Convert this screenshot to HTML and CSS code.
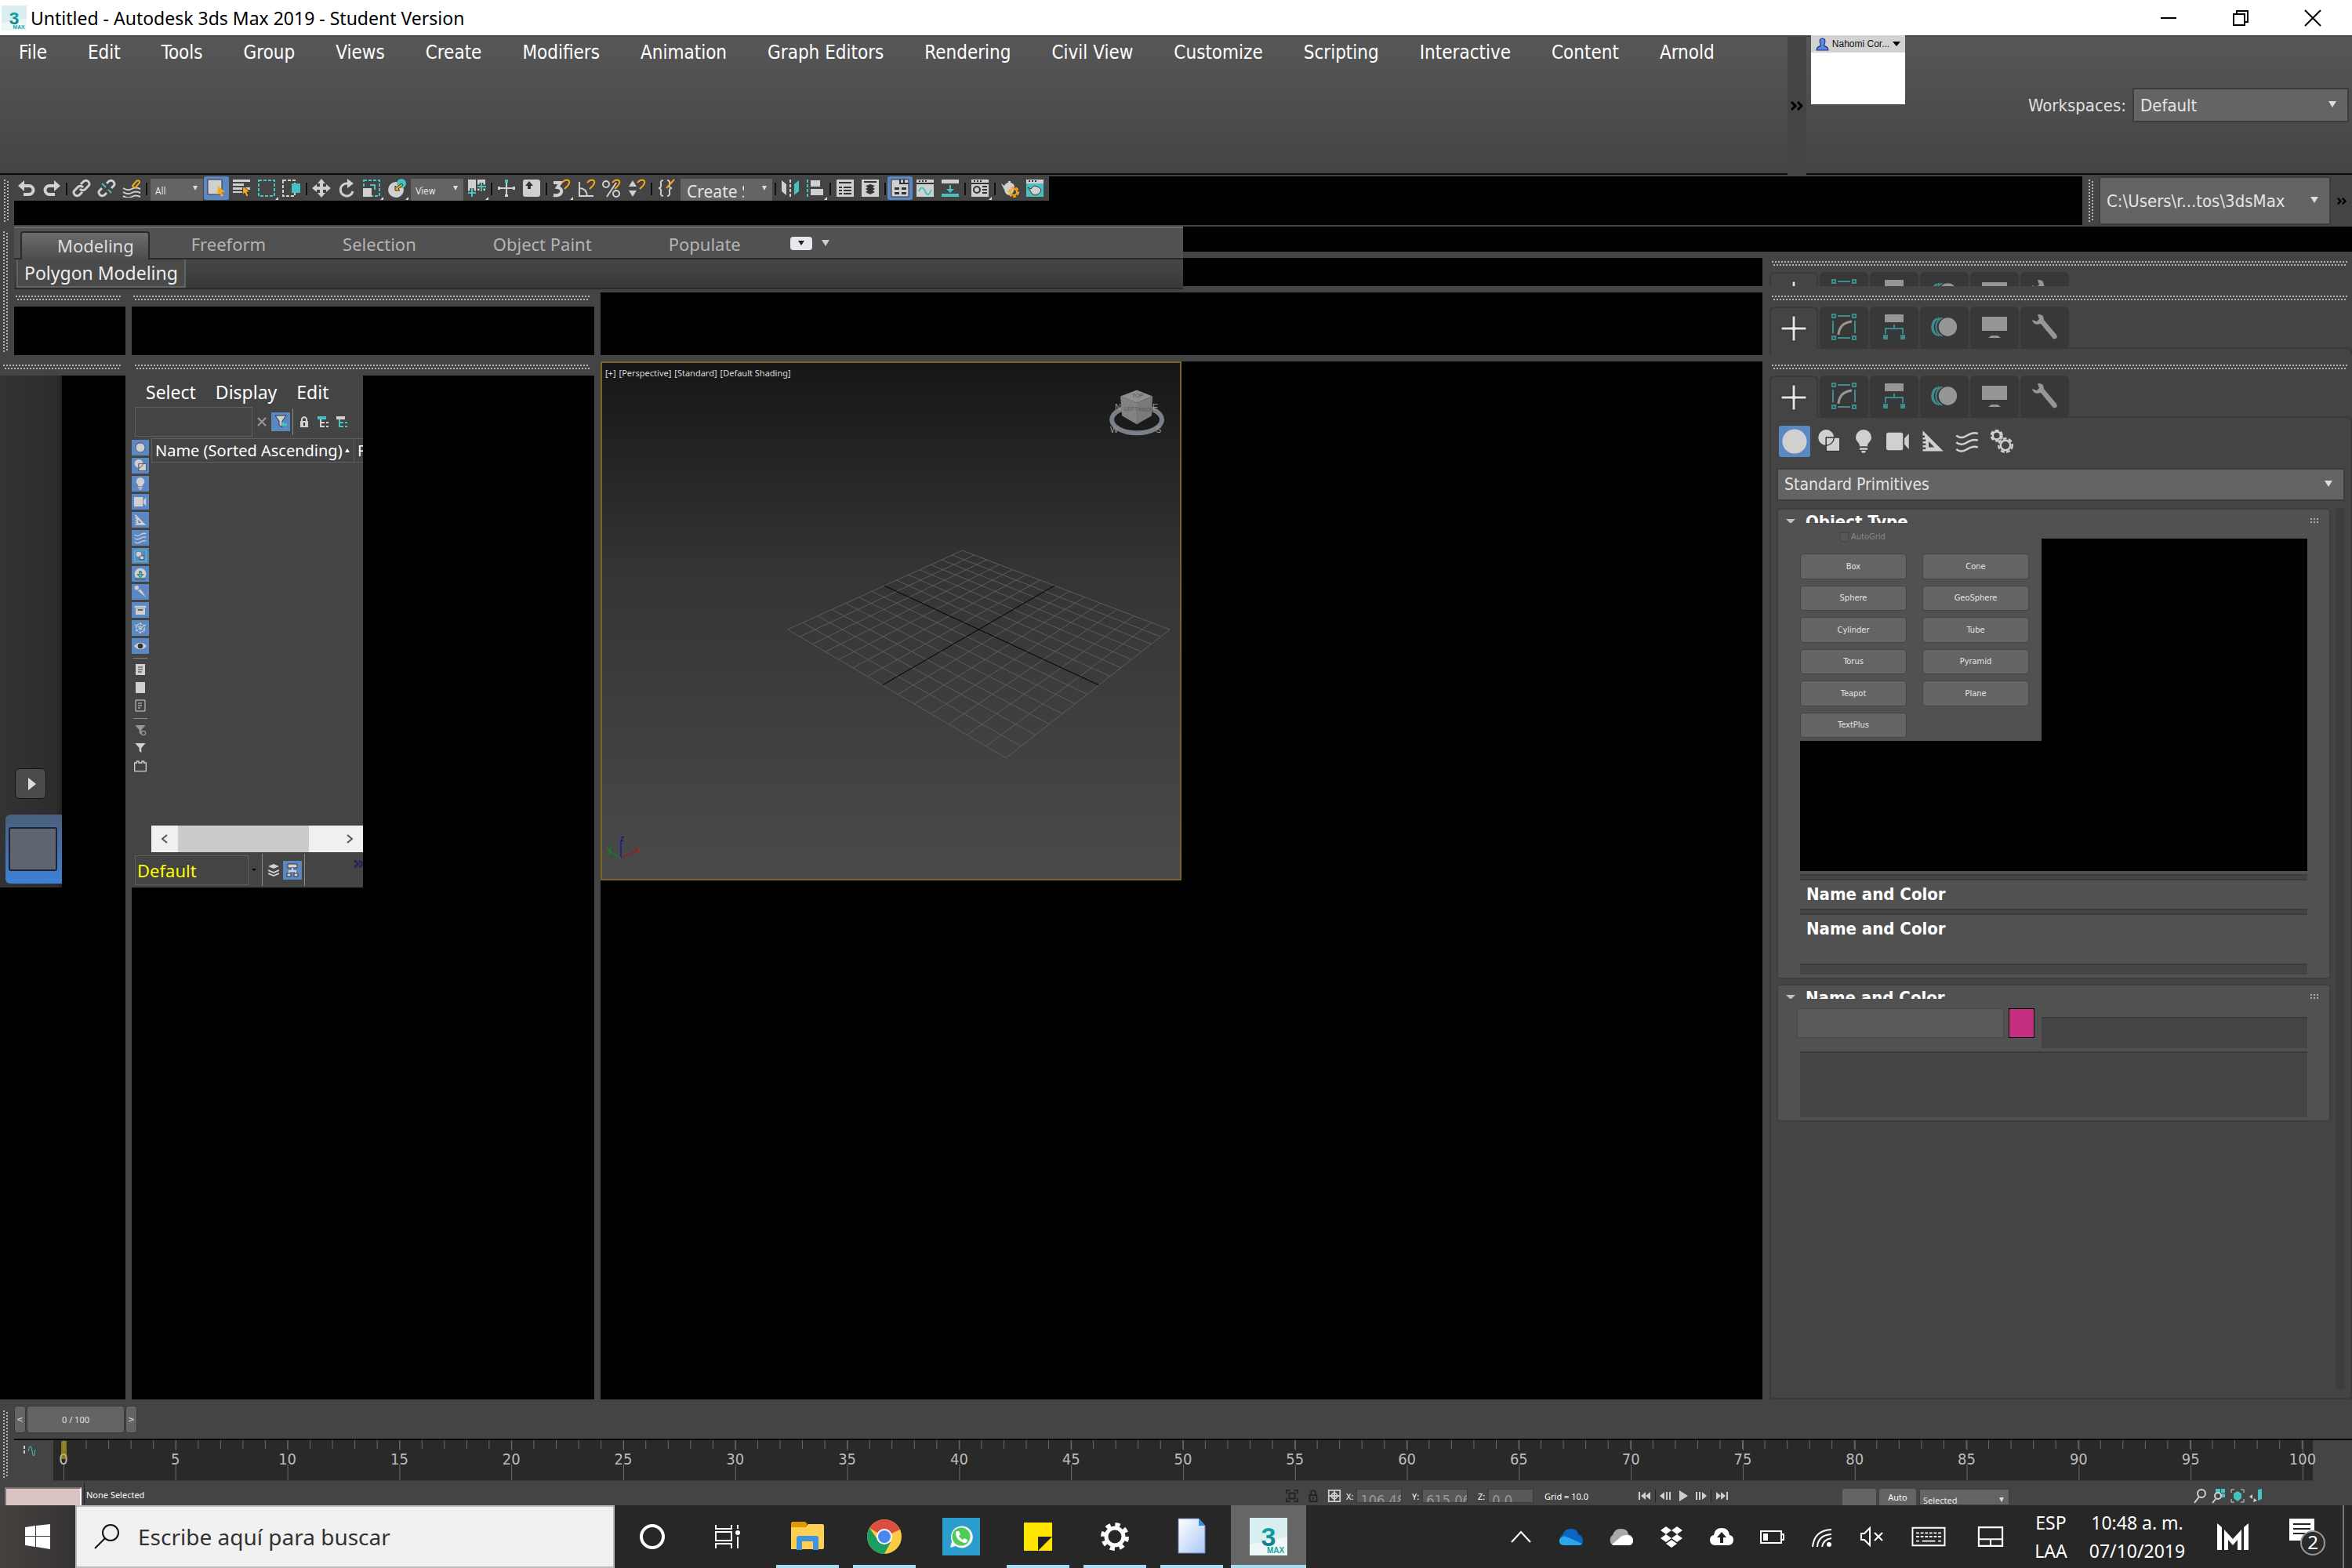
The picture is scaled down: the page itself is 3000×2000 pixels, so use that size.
FILE: index.html
```html
<!DOCTYPE html>
<html lang="en">
<head>
<meta charset="utf-8">
<title>Untitled - Autodesk 3ds Max 2019 - Student Version</title>
<link rel="stylesheet" href="styles.css">
</head>
<body>
<svg class="defs" aria-hidden="true">
  <defs>
    <linearGradient id="paper" x1="0" y1="0" x2="1" y2="1"><stop offset="0" stop-color="#fff"/><stop offset="1" stop-color="#a9c8f5"/></linearGradient>
    <linearGradient id="teal" x1="0" y1="0" x2="0" y2="1"><stop offset="0" stop-color="#0fb5b5"/><stop offset="1" stop-color="#12707c"/></linearGradient>
    <symbol id="max" viewBox="0 0 48 48"><rect width="48" height="48" fill="#d9eeee"/><path d="M0 34L48 24V48H0z" fill="#eef6f6"/><text x="24" y="36" text-anchor="middle" class="max-three" fill="url(#teal)">3</text><text x="33" y="45" text-anchor="middle" class="max-word">MAX</text></symbol>
    <symbol id="sphere" viewBox="0 0 24 24"><circle cx="12" cy="12" r="11" class="c"/></symbol>
    <symbol id="shapes" viewBox="0 0 24 24"><circle cx="9" cy="8" r="8" class="c"/><rect x="9" y="8" width="14" height="14" class="c k"/><path d="M9 16V8h8a8 8 0 0 1-8 8z" class="c k"/></symbol>
    <symbol id="bulb" viewBox="0 0 24 24"><path d="M12 0a8 8 0 0 0-8 8c0 4 4 5 4 9h8c0-4 4-5 4-9a8 8 0 0 0-8-8zM8 18.500h8v2H8zM10 21.500h4v2h-4z" class="c"/></symbol>
    <symbol id="camera" viewBox="0 0 24 24"><rect x="0" y="3" width="17" height="18" rx="2" class="c"/><path d="M18.500 9L23 4v16l-4.500-5z" class="c"/></symbol>
    <symbol id="ruler" viewBox="0 0 24 24"><path fill-rule="evenodd" d="M2 1l21 21H2v-2h3v-2H2v-2h3v-2H2v-2h3v-2H2V8h2V6H2zM8 12v6h6z" class="c"/></symbol>
    <symbol id="waves" viewBox="0 0 24 24"><path d="M1 6q5 4 11 0t11-2M1 13q5 4 11 0t11-2M1 20q5 4 11 0t11-2" class="s"/></symbol>
    <symbol id="gears" viewBox="0 0 24 24"><circle cx="7" cy="6" r="4" class="s"/><circle cx="7" cy="6" r="5.500" class="s dash"/><circle cx="16" cy="16" r="5" class="s"/><circle cx="16" cy="16" r="7" class="s dash"/></symbol>
    <symbol id="magnet" viewBox="0 0 24 24"><path d="M13 5q4-5 8-3 3 2-1 7l-4 4" class="so"/></symbol>
    <symbol id="plus" viewBox="0 0 34 34"><path d="M15 1h4v14h14v4H19v14h-4V19H1v-4h14z" fill="#e4e4e4" stroke="#2c2c2c"/></symbol>
    <symbol id="modify" viewBox="0 0 34 34"><path d="M9 3h16M9 31h16M3 9v16M31 9v16" class="std"/><path d="M2 1h4v4H2zM28 1h4v4h-4zM2 29h4v4H2zM28 29h4v4h-4z" class="std"/><path d="M10 27Q11 12 27 10" fill="none" stroke="#969696" stroke-width="3"/></symbol>
    <symbol id="hierarchy" viewBox="0 0 34 34"><rect x="5" y="1" width="24" height="10" fill="#969696"/><path d="M17 14v5M6 26v-7h22v7" class="std"/><path d="M3 27h6v6H3zM25 27h6v6h-6z" fill="#3f8c8c"/></symbol>
    <symbol id="motion" viewBox="0 0 38 34"><path d="M12 4a14 14 0 0 0 0 26M8 5a14 14 0 0 0 0 24M16 4a14 14 0 0 0 0 26" class="std"/><circle cx="24" cy="17" r="13" fill="#969696"/></symbol>
    <symbol id="display" viewBox="0 0 34 34"><path d="M1 4h32v18H1zM9 31h16l-4-3h-8z" fill="#969696"/></symbol>
    <symbol id="wrench" viewBox="0 0 34 34"><path d="M1 8l6 2 3-3-2-6q8-1 8 7l16 19q2 4-1 5t-4-1L12 13Q3 16 1 8z" fill="#969696"/></symbol>
    <symbol id="funnel" viewBox="0 0 24 24"><path d="M2 3h20l-8 9v9l-4-3v-6z" class="c"/></symbol>
  </defs>
</svg>

<header class="titlebar">
  <svg class="app-icon"><use href="#max"/></svg>
  <h1>Untitled - Autodesk 3ds Max 2019 - Student Version</h1>
  <div class="window-buttons">
    <button aria-label="Minimize"><svg viewBox="0 0 22 22"><path d="M1 11h20"/></svg></button>
    <button aria-label="Restore"><svg viewBox="0 0 22 22"><path d="M2 6h14v14H2zM6 6V2h14v14h-4"/></svg></button>
    <button aria-label="Close"><svg viewBox="0 0 22 22"><path d="M1 1l20 20M21 1L1 21"/></svg></button>
  </div>
</header>

<div class="menu-row">
  <nav class="menu shade" aria-label="Main menu">
    <button>File</button><button>Edit</button><button>Tools</button><button>Group</button><button>Views</button><button>Create</button><button>Modifiers</button><button>Animation</button><button>Graph Editors</button><button>Rendering</button><button>Civil View</button><button>Customize</button><button>Scripting</button><button>Interactive</button><button>Content</button><button>Arnold</button>
  </nav>
  <button class="overflow" aria-label="More menus"><svg viewBox="0 0 16 12"><path d="M1 1l5 5-5 5M9 1l5 5-5 5"/></svg></button>
  <div class="menu-side shade">
    <div class="account"><button><svg viewBox="0 0 16 16"><path d="M8 1q4 0 3 5-1 3-1 4 5 1 5 5H1q0-4 5-5 0-1-1-4-1-5 3-5z" fill="#5f86e8" stroke="#14306e"/></svg><span>Nahomi Cor...</span><i class="tri"></i></button></div>
    <div class="workspaces"><label for="ws">Workspaces:</label><span class="combo"><select id="ws"><option>Default</option></select></span></div>
  </div>
</div>

<div class="tool-row">
  <i class="grip-v"></i>
  <div class="tool-dock">
    <div class="tools" role="toolbar">
      <button aria-label="Undo"><svg viewBox="0 0 24 24"><path d="M1 9l8-7v5h6a7 7 0 0 1 0 15H8v-4h7a3 3 0 0 0 0-7H9v5z" class="c"/></svg></button>
      <button aria-label="Redo"><svg viewBox="0 0 24 24"><path d="M23 9l-8-7v5H9a7 7 0 0 0 0 15h7v-4H9a3 3 0 0 1 0-7h6v5z" class="c"/></svg></button>
      <i class="sep"></i>
      <button aria-label="Link"><svg viewBox="0 0 24 24"><path d="M11 7l4-4q4-2 6 1t0 5l-5 5q-3 2-6-1M13 17l-4 4q-4 2-6-1t0-5l5-5q3-2 6 1" class="s3"/></svg></button>
      <button aria-label="Unlink"><svg viewBox="0 0 24 24"><path d="M12 6l3-3q4-2 6 1t0 5l-3 3M12 18l-3 3q-4 2-6-1t0-5l3-3" class="s3"/><path d="M6 6l5 5M14 14l4 4" class="st"/></svg></button>
      <button aria-label="Bind to space warp"><svg viewBox="0 0 24 24"><path d="M1 12q6 4 11 1t11 0M1 17q6 4 11 1t11 0M1 22q6 4 11 1t11 0" class="s"/><path d="M13 9l5-6q4-2 4 2l-5 6q-3 1-4-2z" class="so"/></svg></button>
      <i class="sep"></i>
      <span class="combo combo-all"><select aria-label="Selection filter"><option>All</option></select></span>
      <button class="on" aria-label="Select object"><svg viewBox="0 0 24 24"><path d="M1 1h18v19H1z" class="c k"/><path d="M14 9l9 8h-4l2 5-3 1-2-5-3 3z" class="o"/></svg></button>
      <button aria-label="Select by name"><svg viewBox="0 0 24 24"><path d="M1 1h22v3H1zM1 6h14v3H1zM1 11h22v3H1zM1 16h13v2H1z" class="c"/><path d="M14 9l9 8h-4l2 5-3 1-2-5-3 3z" class="o k"/></svg></button>
      <button class="fly" aria-label="Rectangular region"><svg viewBox="0 0 24 24"><path d="M2 2h20v20H2z" class="st dash"/></svg></button>
      <button aria-label="Window crossing"><svg viewBox="0 0 24 24"><path d="M1 2h15v20H1z" class="s dash"/><path d="M12 6h11v12H12z" class="t"/></svg></button>
      <i class="sep"></i>
      <button aria-label="Move"><svg viewBox="0 0 24 24"><path d="M12 0l5 6h-3v4h4V7l6 5-6 5v-3h-4v4h3l-5 6-5-6h3v-4H6v3l-6-5 6-5v3h4V6H7z" class="c"/></svg></button>
      <button aria-label="Rotate"><svg viewBox="0 0 24 24"><path d="M14 6h-2a8 8 0 1 0 8 10" class="s3"/><path d="M13 0l8 6-8 6z" class="c"/></svg></button>
      <button class="fly" aria-label="Scale"><svg viewBox="0 0 24 24"><path d="M2 2h20v20H2z" class="st dash"/><path d="M1 12h11v11H1z" class="c"/><path d="M10 8h6v6" class="st"/></svg></button>
      <button class="fly" aria-label="Place"><svg viewBox="0 0 24 24"><circle cx="11" cy="14" r="10" class="c"/><circle cx="18" cy="6" r="6" class="t"/><path d="M10 15V9l2 2 6-5 2 2-6 5 2 2z" class="o k"/></svg></button>
      <span class="combo combo-view"><select aria-label="Reference coordinate system"><option>View</option></select></span>
      <button class="fly" aria-label="Pivot center"><svg viewBox="0 0 24 24"><path d="M1 1h10v15H1zM13 1h10v14H13z" class="c"/><path d="M6 12v11M1 18h10M18 5v11M13 10h11" stroke="#444" stroke-width="5"/><path d="M6 12v11M1 18h10M18 5v11M13 10h11" class="st"/></svg></button>
      <i class="sep"></i>
      <button aria-label="Manipulate"><svg viewBox="0 0 24 24"><path d="M12 5v18M1 12h22" class="s"/><path d="M10 1h4v4h-4z" class="t"/><path d="M10 20h4v3h-4zM1 10h3v4H1zM20 10h3v4h-3z" class="c"/></svg></button>
      <button aria-label="Keyboard override"><svg viewBox="0 0 24 24"><rect x="1" y="1" width="22" height="22" rx="3" class="c"/><path d="M9 3l5 6h-3v4H7V9H4z" class="d"/></svg></button>
      <i class="sep"></i>
      <button class="fly" aria-label="Snaps toggle"><svg viewBox="0 0 24 24"><path d="M2 5h9L7 11q6 1 5 6t-10 4" class="s4"/><use href="#magnet"/></svg></button>
      <button aria-label="Angle snap"><svg viewBox="0 0 24 24"><path d="M3 4v18h18M3 12q9 0 10 10" class="s"/><use href="#magnet"/></svg></button>
      <button aria-label="Percent snap"><svg viewBox="0 0 24 24"><circle cx="5" cy="7" r="4" class="s"/><circle cx="18" cy="19" r="4" class="s"/><path d="M18 5L6 23" class="s"/><use href="#magnet"/></svg></button>
      <button aria-label="Spinner snap"><svg viewBox="0 0 24 24"><path d="M7 2l5 8H2zM7 23l5-8H2z" class="c"/><use href="#magnet"/></svg></button>
      <i class="sep"></i>
      <button aria-label="Edit named selections"><svg viewBox="0 0 24 24"><path d="M8 2Q4 2 5 7t-3 5q4 0 3 5t3 5M13 2q4 0 3 5t3 5q-4 0-3 5t-3 5" class="s"/><path d="M22 1L12 12" class="so"/></svg></button>
      <span class="combo combo-set"><select aria-label="Named selection sets"><option>Create Selection Set</option></select></span>
      <i class="sep"></i>
      <button aria-label="Mirror"><svg viewBox="0 0 24 24"><path d="M1 2l6 5v14l-6-5z" class="c"/><path d="M12 1v22" class="s dash"/><path d="M23 2l-6 5v14l6-5z" class="t"/></svg></button>
      <button class="fly" aria-label="Align"><svg viewBox="0 0 24 24"><path d="M2 1v22" class="st dash"/><path d="M6 2h12v8H6zM6 13h16v8H6z" class="c"/></svg></button>
      <i class="sep"></i>
      <button aria-label="Scene explorer"><svg viewBox="0 0 24 24"><path d="M1 1h22v22H1z" class="c"/><path d="M4 5h16M4 11h4M10 11h10M4 15h4M10 15h10M4 19h4M10 19h10" class="sd"/></svg></button>
      <button aria-label="Layer explorer"><svg viewBox="0 0 24 24"><path d="M1 1h22v22H1z" class="c"/><path d="M4 4h16" class="sd"/><path d="M12 7l6 2-3 2 3 2-3 2 3 2-6 3-6-3 3-2-3-2 3-2-3-2z" class="d"/></svg></button>
      <i class="sep"></i>
      <button class="on" aria-label="Toggle ribbon"><svg viewBox="0 0 24 24"><path d="M1 1h22v22H1z" class="c k"/><path d="M12 1v5h11M17 1v5" class="sd"/><path d="M5 11h6v3H5zM14 11h6v3h-6zM5 17h6v3H5zM14 17h6v3h-6z" class="d"/></svg></button>
      <button aria-label="Curve editor"><svg viewBox="0 0 24 24"><path d="M1 1h22v22H1z" class="c"/><path d="M1 6h22M4 3h2M8 3h2M12 3h2" class="sd"/><path d="M4 16q4-9 8 0t8-2" class="st"/></svg></button>
      <button aria-label="Schematic view"><svg viewBox="0 0 24 24"><path d="M1 1h22v5H1z" class="c"/><path d="M11 8h2v5h4l-5 5-5-5h4zM1 19h22v4H1z" class="t"/></svg></button>
      <i class="sep"></i>
      <button class="fly" aria-label="Material editor"><svg viewBox="0 0 24 24"><path d="M1 1h22v22H1z" class="c"/><path d="M1 6h22M4 3h2M8 3h2M12 3h2M15 10h6M15 14h6M15 18h6" class="sd"/><circle cx="8" cy="14" r="4" class="sd"/></svg></button>
      <i class="sep"></i>
      <button aria-label="Render setup"><svg viewBox="0 0 24 24"><path d="M1 6l4 3q2-4 5-4V3h3v2q5 1 5 6-1 9-7 10-5-1-6-7z" class="c"/><circle cx="17" cy="17" r="4" class="so"/><circle cx="17" cy="17" r="6" class="so dash"/></svg></button>
      <button aria-label="Rendered frame"><svg viewBox="0 0 24 24"><path d="M1 1h22v22H1z" class="t"/><path d="M1 1h22v5H1z" class="c"/><path d="M4 3h2M8 3h2M12 3h2" class="sd"/><path d="M3 11l4 2q3-4 5-4 6 1 8 5-1 6-8 7-5-1-6-6z" class="c k"/></svg></button>
    </div>
  </div>
  <i class="grip-v"></i>
  <span class="combo combo-path"><select aria-label="Project folder"><option>C:\Users\r...tos\3dsMax</option></select></span>
  <button class="overflow small" aria-label="More tools"><svg viewBox="0 0 16 12"><path d="M1 1l5 5-5 5M9 1l5 5-5 5"/></svg></button>
</div>

<main class="workspace">
  <div class="edge"><i class="grip-v"></i></div>
  <section class="ribbon" aria-label="Ribbon">
    <div class="ribbon-tabs">
      <button class="current">Modeling</button><button>Freeform</button><button>Selection</button><button>Object Paint</button><button>Populate</button>
      <button class="ribbon-toggle" aria-label="Minimize ribbon"><span><i class="tri"></i></span><i class="tri light"></i></button>
    </div>
    <div class="ribbon-body"><button>Polygon Modeling</button></div>
  </section>
  <div class="void-top"></div>
  <div class="void-mid"></div>
  <div class="strip strip-a"><i class="grip-h"></i><div class="void"></div></div>
  <div class="strip strip-b"><i class="grip-h"></i><div class="void"></div></div>
  <div class="void-view"></div>

  <aside class="layouts">
    <i class="grip-h"></i>
    <div class="void">
      <div class="layout-bar">
        <button class="play" aria-label="Show layouts"><svg viewBox="0 0 12 16"><path d="M1 0l10 8-10 8z" fill="#ddd"/></svg></button>
        <button class="layout-thumb" aria-label="Layout"><span></span></button>
      </div>
    </div>
  </aside>

  <section class="explorer-dock">
    <i class="grip-h"></i>
    <div class="void">
      <div class="explorer">
        <div class="ex-menu"><button>Select</button><button>Display</button><button>Edit</button></div>
        <div class="ex-find">
          <input type="text" aria-label="Find">
          <button aria-label="Clear"><svg viewBox="0 0 24 24"><path d="M7 7l10 10M17 7L7 17" stroke="#999" stroke-width="2"/></svg></button>
          <button class="on" aria-label="Filter"><svg viewBox="0 0 24 24"><path d="M5 4h14l-5 7v8l-4-3v-5z" class="c k"/><path d="M12 15l4-4v3h4v3h-4v2z" class="t"/></svg></button>
          <i class="bar"></i>
          <button aria-label="Lock"><svg viewBox="0 0 24 24"><path d="M7 11h10v8H7z" class="c"/><path d="M9 11V8q3-4 6 0v3" class="s"/><path d="M12 13v4" class="sd"/></svg></button>
          <button aria-label="Expand"><svg viewBox="0 0 24 24"><path d="M5 5h11v4H5z" class="t"/><path d="M9 9v9h5M9 13h5M16 13h3M16 18h3" class="s"/></svg></button>
          <button aria-label="Collapse"><svg viewBox="0 0 24 24"><path d="M5 5h11v4H5z" class="c"/><path d="M9 9v9h5M9 13h5M16 13h3M16 18h3" class="st"/></svg></button>
        </div>
        <div class="ex-body">
          <div class="ex-side">
            <div class="ex-filters">
              <button aria-label="Geometry"><svg viewBox="0 0 24 24"><circle cx="12" cy="12" r="9" class="c k"/></svg></button>
              <button aria-label="Shapes"><svg viewBox="0 0 24 24"><use href="#shapes"/></svg></button>
              <button aria-label="Lights"><svg viewBox="0 0 24 24"><use href="#bulb"/></svg></button>
              <button aria-label="Cameras"><svg viewBox="0 0 24 24"><use href="#camera"/></svg></button>
              <button aria-label="Helpers"><svg viewBox="0 0 24 24"><use href="#ruler"/></svg></button>
              <button aria-label="Space warps"><svg viewBox="0 0 24 24"><use href="#waves"/></svg></button>
              <button aria-label="Groups"><svg viewBox="0 0 24 24"><path d="M1 1h22v22H1z" class="st"/><circle cx="9" cy="9" r="5" class="c"/><path d="M11 12h8v7h-8z" class="c k"/></svg></button>
              <button aria-label="References"><svg viewBox="0 0 24 24"><use href="#sphere"/><path d="M10 7h4v6h4l-6 6-6-6h4zM4 20h16v3H4z" class="t k"/></svg></button>
              <button aria-label="Bones"><svg viewBox="0 0 24 24"><circle cx="5" cy="4" r="4" class="c"/><path d="M7 9l6-2 10 16z" class="c"/></svg></button>
              <button aria-label="Containers"><svg viewBox="0 0 24 24"><path d="M1 4h22v4H1zM3 9h18v12H3z" class="c"/><path d="M7 12h10" class="sd"/></svg></button>
              <button aria-label="Frozen"><svg viewBox="0 0 24 24"><path d="M12 1v22M2 6l20 12M22 6L2 18" class="s dash"/><circle cx="12" cy="12" r="8" class="s dash"/></svg></button>
              <button aria-label="Hidden"><svg viewBox="0 0 24 24"><path d="M0 12q12-13 24 0-12 13-24 0z" class="c"/><circle cx="12" cy="12" r="5" class="d"/></svg></button>
            </div>
            <div class="ex-extra">
              <button aria-label="Display all"><svg viewBox="0 0 16 16"><path d="M2 1h12v14H2z" class="c"/><path d="M5 5h6M5 8h6M5 11h5" class="sd thin"/></svg></button>
              <button aria-label="Display none"><svg viewBox="0 0 16 16"><path d="M2 1h12v14H2z" class="c"/></svg></button>
              <button aria-label="Invert display"><svg viewBox="0 0 16 16"><path d="M2 1h12v14H2zM5 5h5M5 8h5M5 11h3" class="s thin"/></svg></button>
            </div>
            <div class="ex-extra">
              <button class="dim" aria-label="Advanced filter"><svg viewBox="0 0 24 24"><use href="#funnel"/><circle cx="18" cy="18" r="4" class="s"/></svg></button>
              <button aria-label="Filter selection"><svg viewBox="0 0 24 24"><use href="#funnel"/></svg></button>
              <button aria-label="Container"><svg viewBox="0 0 24 24"><path d="M1 22V6h4V3h4v3h6V3h4v3h4v16z" class="s"/></svg></button>
            </div>
          </div>
          <div class="ex-list">
            <table><thead><tr><th class="name">Name (Sorted Ascending)<i class="tri up"></i></th><th>Frozen</th></tr></thead></table>
            <div class="hscroll"><button aria-label="Scroll left"><svg viewBox="0 0 12 12"><path d="M9 1L3 6l6 5"/></svg></button><i></i><button aria-label="Scroll right"><svg viewBox="0 0 12 12"><path d="M3 1l6 5-6 5"/></svg></button></div>
          </div>
        </div>
        <div class="ex-foot">
          <input type="text" value="Default" aria-label="Explorer name"><i class="tri black"></i><i class="bar"></i>
          <button aria-label="Sort by layer"><svg viewBox="0 0 24 24"><path d="M12 4l7 3-7 3-7-3zM5 11l7 3 7-3v2l-7 3-7-3zM5 15l7 3 7-3v2l-7 3-7-3z" class="c"/></svg></button>
          <button class="on" aria-label="Sort by hierarchy"><svg viewBox="0 0 24 24"><path d="M6 4h12v5H6z" class="c k"/><path d="M12 9v4M8 16v-3h8v3" class="s"/><path d="M5 16h5v4H5zM14 16h5v4h-5z" class="c k"/></svg></button>
          <i class="bar"></i>
          <svg class="more" viewBox="0 0 16 12"><path d="M1 1l6 5-6 5M8 1l6 5-6 5"/></svg>
        </div>
      </div>
    </div>
  </section>

  <section class="view-dock">
    <div class="viewport">
      <p class="view-label"><span>[+]</span><span>[Perspective]</span> <span>[Standard]</span> <span>[Default Shading]</span></p>
      <svg class="scene" viewBox="0 0 738 658" aria-label="Perspective grid"><g id="grid"></g>
        <g class="cube">
          <ellipse cx="683" cy="72" rx="32" ry="17" fill="#1b1b1b" stroke="#7b7f87" stroke-width="6"/>
          <path d="M662 42l21-8 20 8-20 8z" fill="#8f8f8f"/><path d="M662 42l21 8v28l-19-11z" fill="#828282"/><path d="M703 42l-20 8v28l19-11z" fill="#7a7a7a"/>
          <text x="667" y="61">LEFT</text><text x="685" y="62">FRONT</text><text x="677" y="44">TOP</text>
          <text x="649" y="89" class="pt">W</text><text x="707" y="89" class="pt">S</text><text x="655" y="60" class="pt">N</text><text x="703" y="60" class="pt">E</text>
        </g>
        <g class="axes"><path d="M24 632V609" stroke="#00c"/><path d="M24 632l20-10" stroke="#c00"/><path d="M24 632l-14-8" stroke="#090"/><text x="23" y="610" fill="#00c">z</text><text x="43" y="624" fill="#b11">x</text><text x="7" y="624" fill="#090">y</text></g>
      </svg>
    </div>
  </section>

  <aside class="command">
    <div class="peek peek-a"><i class="grip-h"></i>
      <div class="tabs"><button class="current" aria-label="Create"><svg><use href="#plus"/></svg></button><button aria-label="Modify"><svg><use href="#modify"/></svg></button><button aria-label="Hierarchy"><svg><use href="#hierarchy"/></svg></button><button aria-label="Motion"><svg><use href="#motion"/></svg></button><button aria-label="Display"><svg><use href="#display"/></svg></button><button aria-label="Utilities"><svg><use href="#wrench"/></svg></button></div>
    </div>
    <div class="peek peek-b"><i class="grip-h"></i>
      <div class="tabs"><button class="current" aria-label="Create"><svg><use href="#plus"/></svg></button><button aria-label="Modify"><svg><use href="#modify"/></svg></button><button aria-label="Hierarchy"><svg><use href="#hierarchy"/></svg></button><button aria-label="Motion"><svg><use href="#motion"/></svg></button><button aria-label="Display"><svg><use href="#display"/></svg></button><button aria-label="Utilities"><svg><use href="#wrench"/></svg></button></div>
      <div class="sheet"></div>
    </div>
    <div class="peek peek-c"><i class="grip-h"></i>
      <div class="tabs"><button class="current" aria-label="Create"><svg><use href="#plus"/></svg></button><button aria-label="Modify"><svg><use href="#modify"/></svg></button><button aria-label="Hierarchy"><svg><use href="#hierarchy"/></svg></button><button aria-label="Motion"><svg><use href="#motion"/></svg></button><button aria-label="Display"><svg><use href="#display"/></svg></button><button aria-label="Utilities"><svg><use href="#wrench"/></svg></button></div>
      <div class="sheet">
        <div class="cats">
          <button class="on" aria-label="Geometry"><svg><use href="#sphere"/></svg></button><button aria-label="Shapes"><svg><use href="#shapes"/></svg></button><button aria-label="Lights"><svg><use href="#bulb"/></svg></button><button aria-label="Cameras"><svg><use href="#camera"/></svg></button><button aria-label="Helpers"><svg><use href="#ruler"/></svg></button><button aria-label="Space warps"><svg><use href="#waves"/></svg></button><button aria-label="Systems"><svg><use href="#gears"/></svg></button>
        </div>
        <span class="combo combo-prim"><select aria-label="Category"><option>Standard Primitives</option></select></span>
        <div class="rollouts">
          <div class="rollout-list">
            <section class="rollout">
              <header><i class="tri pale"></i><h2>Object Type</h2><i class="dots"></i></header>
              <div class="object-type">
                <div class="pane">
                  <label><input type="checkbox" disabled>AutoGrid</label>
                  <div class="primitives"><button>Box</button><button>Cone</button><button>Sphere</button><button>GeoSphere</button><button>Cylinder</button><button>Tube</button><button>Torus</button><button>Pyramid</button><button>Teapot</button><button>Plane</button><button>TextPlus</button></div>
                </div>
                <div class="gap-right"></div><div class="gap-left"></div>
              </div>
              <div class="ghost"><i></i><h2>Name and Color</h2></div>
              <div class="ghost tall"><i></i><h2>Name and Color</h2></div>
              <div class="ghost-end"></div>
            </section>
            <section class="rollout">
              <header><i class="tri pale"></i><h2>Name and Color</h2><i class="dots"></i></header>
              <div class="name-color"><input type="text" aria-label="Object name"><button class="swatch" aria-label="Object color"></button><i></i></div>
              <div class="name-rest"></div>
            </section>
          </div>
          <div class="track"></div>
        </div>
      </div>
    </div>
  </aside>
</main>

<section class="timeline" aria-label="Timeline">
  <i class="grip-v"></i>
  <div class="time-main">
    <div class="time-slider"><button aria-label="Previous frame">&lt;</button><button class="frame">0 / 100</button><button aria-label="Next frame">&gt;</button></div>
    <div class="track-row">
      <button class="mini-curve" aria-label="Mini curve editor"><svg viewBox="0 0 16 14"><path d="M1 1v12" class="s dash"/><path d="M6 8q3-13 5 0t4-2" class="st thin"/></svg></button>
      <div class="ruler"><ol class="scale"><li>0</li><li>5</li><li>10</li><li>15</li><li>20</li><li>25</li><li>30</li><li>35</li><li>40</li><li>45</li><li>50</li><li>55</li><li>60</li><li>65</li><li>70</li><li>75</li><li>80</li><li>85</li><li>90</li><li>95</li><li>100</li></ol></div>
    </div>
  </div>
</section>

<footer class="status">
  <div class="listener"></div><i class="bar"></i><span class="message">None Selected</span>
  <div class="coords">
    <button aria-label="Isolate"><svg viewBox="0 0 20 20"><path d="M2 7V2h5M13 2h5v5M18 13v5h-5M7 18H2v-5M6 6h8v8H6z" class="sk"/></svg></button>
    <button aria-label="Selection lock"><svg viewBox="0 0 20 20"><path d="M5 9h10v9H5zM7 9V4q3-4 6 0v5M10 12v3" class="sk"/></svg></button>
    <button aria-label="Absolute mode"><svg viewBox="0 0 20 20"><path d="M2 2h16v16H2zM10 2v16M2 10h16" class="s"/><circle cx="10" cy="10" r="4" class="s"/></svg></button>
    <label>X: <input type="text" value="106.48" disabled></label><label>Y: <input type="text" value="615.06" disabled></label><label>Z: <input type="text" value="0.0" disabled></label>
    <span>Grid = 10.0</span>
  </div>
  <div class="playback">
    <button aria-label="Go to start"><svg viewBox="0 0 20 16"><path d="M3 3v10" class="s"/><path d="M11 3v10L5 8zM17 3v10l-6-5z" class="c"/></svg></button><i class="bar"></i>
    <button aria-label="Previous"><svg viewBox="0 0 20 16"><path d="M8 3v10L2 8z" class="c"/><path d="M11 3v10M15 3v10" class="s"/></svg></button>
    <button aria-label="Play"><svg viewBox="0 0 20 16"><path d="M5 1l11 7-11 7z" class="c"/></svg></button>
    <button aria-label="Next"><svg viewBox="0 0 20 16"><path d="M12 3v10l6-5z" class="c"/><path d="M5 3v10M9 3v10" class="s"/></svg></button><i class="bar"></i>
    <button aria-label="Go to end"><svg viewBox="0 0 20 16"><path d="M17 3v10" class="s"/><path d="M9 3v10l6-5zM3 3v10l6-5z" class="c"/></svg></button>
  </div>
  <div class="keys"><button class="set" aria-label="Set key"></button><button>Auto</button><span class="combo combo-key"><select aria-label="Key set"><option>Selected</option></select></span></div>
  <div class="nav">
    <button aria-label="Zoom"><svg viewBox="0 0 20 20"><circle cx="12" cy="7" r="5" class="s"/><path d="M9 11l-6 8" class="s"/></svg></button>
    <button aria-label="Zoom all"><svg viewBox="0 0 20 20"><path d="M6 1h6v5H6zM13 1h5v5h-5zM13 7h5v5h-5z" class="t"/><circle cx="9" cy="10" r="4" class="s"/><path d="M6 14l-4 5" class="s"/></svg></button>
    <button aria-label="Zoom extents"><svg viewBox="0 0 20 20"><path d="M2 6V2h4M14 2h4v4M18 14v4h-4M6 18H2v-4" class="s thin"/><path d="M10 4l5 3v6l-5 4-5-4V7z" class="t"/></svg></button>
    <button aria-label="Orbit"><svg viewBox="0 0 20 20"><path d="M12 2l5-1v13l-5 2z" class="t"/><path d="M1 11l4-3v6zM7 13l4 3-5 2z" class="c"/></svg></button>
  </div>
</footer>

<footer class="taskbar" lang="es">
  <button class="start" aria-label="Inicio"><svg viewBox="0 0 32 32"><path d="M0 4l13-2v13H0zM14 2l18-2v15H14zM0 16h13v13L0 27zM14 16h18v16l-18-3z" fill="#fff"/></svg></button>
  <label class="search"><svg viewBox="0 0 32 32"><circle cx="21" cy="11" r="10"/><path d="M14 18L1 31"/></svg><input type="text" placeholder="Escribe aquí para buscar" aria-label="Buscar"></label>
  <button aria-label="Cortana"><svg viewBox="0 0 36 36"><circle cx="18" cy="18" r="14" fill="none" stroke="#fff" stroke-width="4"/></svg></button>
  <button aria-label="Vista de tareas"><svg viewBox="0 0 36 36" fill="none" stroke="#fff" stroke-width="2"><path d="M3 3v5h20V3M3 33v-6h20v6M3 12h20v11H3zM31 3v5M31 18v15"/><circle cx="31" cy="13" r="2" fill="#fff"/></svg></button>
  <div class="apps">
    <button class="open" aria-label="Explorador"><svg viewBox="0 0 44 44"><path d="M1 5q0-2 2-2h16l3 3-3 4H1z" fill="#e09a00"/><path d="M1 10h18l4-4h18q2 0 2 2v28q0 2-2 2H1z" fill="#ffcf55"/><path d="M8 39V24q0-3 3-3h22q3 0 3 3v15h-7V28H15v11z" fill="#3d96dc"/></svg></button>
    <button class="open" aria-label="Chrome"><svg viewBox="0 0 48 48"><circle cx="24" cy="24" r="22" fill="#fbcb43"/><path d="M24 24L5 13A22 22 0 0 1 44 15z" fill="#dc4e41"/><path d="M24 46A22 22 0 0 1 5 13l12 17 15 1z" fill="#1a9f5c"/><circle cx="24" cy="24" r="10" fill="#fff"/><circle cx="24" cy="24" r="8" fill="#4a86f0"/></svg></button>
    <button aria-label="WhatsApp"><svg viewBox="0 0 48 48"><rect width="48" height="48" fill="#2a9ccd"/><path d="M10 38l2-8a14 14 0 1 1 5 6z" fill="#f3f3f3"/><circle cx="24" cy="24" r="11.500" fill="#4fcb58"/><path d="M18 17l3 0 2 4-2 2q2 4 5 5l2-2 4 2q0 4-4 4-11-3-11-13z" fill="#fff"/></svg></button>
    <button class="open" aria-label="Notas"><svg viewBox="0 0 48 48"><path d="M6 6h36v36H6z" fill="#ffe600"/><path d="M24 42V24h18z" fill="#222"/></svg></button>
    <button class="open" aria-label="Configuración"><svg viewBox="0 0 48 48" fill="none" stroke="#fff"><circle cx="24" cy="24" r="11" stroke-width="5"/><circle cx="24" cy="24" r="15.500" stroke-width="5" stroke-dasharray="6.170 6" /></svg></button>
    <button class="open" aria-label="Documento"><svg viewBox="0 0 48 48"><path d="M7 1h26l8 9v35H7z" fill="url(#paper)" stroke="#6d7fb5"/><path d="M33 1l8 9h-8z" fill="#3a8de6"/></svg></button>
    <button class="open active" aria-label="3ds Max"><svg><use href="#max"/></svg></button>
  </div>
  <div class="tray">
    <button aria-label="Mostrar iconos"><svg viewBox="0 0 32 32"><path d="M4 23L16 10l12 13" class="w"/></svg></button>
    <button aria-label="OneDrive"><svg viewBox="0 0 32 32"><path d="M6 27a6 7 0 0 1-1-13Q8 5 16 6q8 0 9 7 6 2 6 8t-5 6z" fill="#0a66c2"/><path d="M6 27q-6-1-5-7 3-6 9-4l20 9q-2 2-4 2z" fill="#28a8ea"/></svg></button>
    <button aria-label="Nube"><svg viewBox="0 0 32 32"><path d="M6 27a6 7 0 0 1-1-13Q8 5 16 6q8 0 9 7 6 2 6 8t-5 6z" fill="#a9a9a9"/><path d="M4 26l13-11q6-2 10 0 5 3 4 7t-5 5H6z" fill="#fff"/></svg></button>
    <button aria-label="Dropbox"><svg viewBox="0 0 32 32"><path d="M9 3l7 5-7 5-7-5zM23 3l7 5-7 5-7-5zM9 13l7 5-7 5-7-5zM23 13l7 5-7 5-7-5zM16 20l7 5-7 5-7-5z" fill="#fff"/></svg></button>
    <button aria-label="Respaldo"><svg viewBox="0 0 32 32"><path d="M7 27q-6-1-6-7 0-5 5-6 1-9 10-9t10 9q5 1 5 6 0 6-6 7z" fill="#fff"/><path d="M16 10l6 7h-4v7h-4v-7h-4z" fill="#222"/></svg></button>
    <button aria-label="Batería"><svg viewBox="0 0 32 32"><path d="M2 9h26v15H2zM29 13h2v7h-2" class="w"/><path d="M5 12h6v9H5z" fill="#fff"/></svg></button>
    <button aria-label="Wi-Fi"><svg viewBox="0 0 32 32"><path d="M4 29Q6 8 28 7M10 29q1-15 18-16M16 29q1-9 12-11" class="w"/><circle cx="25" cy="26" r="3" fill="#fff"/></svg></button>
    <button aria-label="Volumen"><svg viewBox="0 0 32 32"><path d="M2 12h4l7-7v22l-7-7H2zM19 11l10 10M29 11L19 21" class="w"/></svg></button>
    <button class="wide" aria-label="Teclado"><svg viewBox="0 0 46 30"><path d="M1 3h44v24H1z" class="w"/><path d="M6 10h34M6 15h34" class="w dash"/><path d="M6 21h4M14 21h18M36 21h4" class="w"/></svg></button>
    <button class="wide" aria-label="Panel táctil"><svg viewBox="0 0 30 26"><path d="M1 2h28v22H1zM1 16h28M15 16v8" class="w"/></svg></button>
    <button class="lang"><span>ESP</span><span>LAA</span></button>
    <button class="clock"><span>10:48 a. m.</span><span>07/10/2019</span></button>
    <button class="m" aria-label="M"><svg viewBox="0 0 42 36"><path d="M1 1l6 5v29H1zM41 1l-6 5v29h6zM10 9l11 12L32 9v26h-5V22l-6 7-6-7v13h-5z" fill="#fff"/></svg></button>
    <button class="notes" aria-label="Notificaciones"><svg viewBox="0 0 52 52"><path d="M3 3h32v28H24l-6 6v-6H3z" fill="#fff"/><path d="M8 10h22M8 16h22M8 22h16" stroke="#222" stroke-width="2"/><circle cx="33" cy="34" r="15" fill="#2b2b2b" stroke="#999" stroke-width="2"/><text x="33" y="42" text-anchor="middle">2</text></svg></button>
    <i class="peek-desktop"></i>
  </div>
</footer>
<script src="script.js"></script>
</body>
</html>
```
FILE: styles.css
```css
* { box-sizing: border-box; }
body {
  margin: 0;
  min-height: 100vh;
  display: flex;
  flex-direction: column;
  background: #444;
  color: #e0e0e0;
  font: 20px "DejaVu Sans Condensed", "Noto Sans", sans-serif;
  overflow-x: hidden;
}
button, input, select { font: inherit; color: inherit; margin: 0; padding: 0; border: 0; background: none; border-radius: 0; }
button { display: flex; align-items: center; justify-content: center; flex: none; white-space: nowrap; }
h1, h2, p, ol { margin: 0; padding: 0; font-size: inherit; }
svg { display: block; flex: none; }
i { flex: none; }
.defs { position: absolute; width: 0; height: 0; }

/* icon paint */
.c { fill: #d0d0d0; }
.t { fill: #46c2c2; }
.o { fill: #f5a81c; }
.d { fill: #333; }
.k { stroke: #333; stroke-width: 1; }
.s { fill: none; stroke: #d0d0d0; stroke-width: 2; }
.s3 { fill: none; stroke: #d0d0d0; stroke-width: 3; }
.s4 { fill: none; stroke: #d0d0d0; stroke-width: 4; }
.st { fill: none; stroke: #46c2c2; stroke-width: 2; }
.so { fill: none; stroke: #f5a81c; stroke-width: 2; }
.sd { fill: none; stroke: #333; stroke-width: 2; }
.sk { fill: none; stroke: #222; stroke-width: 2; }
.std { fill: none; stroke: #3f8c8c; stroke-width: 2; }
.w { fill: none; stroke: #fff; stroke-width: 2; }
.dash { stroke-dasharray: 4 2; }
.thin { stroke-width: 1; }

/* shared pieces */
.void { background: #000; }
.on { background: #5b87c2; border-radius: 3px; }
.tri { width: 0; height: 0; border: 4px solid transparent; border-top: 6px solid #222; border-bottom: 0; }
.tri.light { border-width: 8px 5px 0; border-top-color: #ccc; }
.tri.up { border-top: 0; border-bottom: 5px solid #fff; }
.tri.pale { border-width: 6px 6px 0; border-top-color: #c0c0c0; }
.tri.black { border-width: 3px 3px 0; border-top-color: #000; }
.grip-h {
  display: block; height: 6px; margin: 0 6px;
  background:
    repeating-linear-gradient(90deg, #b5b5b5 0 2px, transparent 2px 4px) 0 0 / 100% 2px no-repeat,
    repeating-linear-gradient(90deg, transparent 0 2px, #b5b5b5 2px 4px) 0 4px / 100% 2px no-repeat;
}
.grip-v {
  display: block; width: 6px;
  background:
    repeating-linear-gradient(#b5b5b5 0 2px, transparent 2px 4px) 0 0 / 2px 100% no-repeat,
    repeating-linear-gradient(transparent 0 2px, #b5b5b5 2px 4px) 4px 0 / 2px 100% no-repeat;
}
.combo { position: relative; display: block; flex: none; background: #646464; border: 2px solid #3d3d3d; }
.combo select { appearance: none; width: 100%; height: 100%; display: block; color: #e4e4e4; padding: 0 36px 0 8px; }
.combo::after { content: ""; position: absolute; right: 14px; top: 50%; margin-top: -5px; border: 5px solid transparent; border-top: 8px solid #ddd; border-bottom: 0; pointer-events: none; }

/* title bar */
.titlebar { height: 45px; background: #fff; color: #000; display: flex; align-items: center; padding: 0 4px 0 2px; }
.app-icon { width: 32px; height: 32px; margin-right: 5px; }
.titlebar h1 { font: 23px "Noto Sans", sans-serif; flex: 1; }
.window-buttons { display: flex; }
.window-buttons button { width: 92px; height: 42px; }
.window-buttons svg { width: 22px; height: 22px; fill: none; stroke: #000; stroke-width: 2; }
.max-three { font: bold 34px "Liberation Sans", sans-serif; }
.max-word { font: bold 10px "Liberation Sans", sans-serif; fill: #12a5a5; }

/* menu */
.menu-row { display: flex; height: 178px; padding-top: 2px; }
.shade { background: linear-gradient(#575757, #444); border-bottom: 2px solid #0a0a0a; }
.menu { flex: 1; display: flex; align-items: flex-start; padding: 5px 0 0 24px; gap: 52px; min-width: 0; overflow: hidden; }
.menu button { font-size: 24px; line-height: 30px; color: #fff; }
.overflow { width: 24px; }
.overflow svg { width: 16px; height: 12px; fill: none; stroke: #000; stroke-width: 3; }
.menu-side { width: 696px; display: flex; justify-content: space-between; padding: 0 4px 0 6px; }
.account { width: 120px; height: 88px; margin-top: -2px; background: #fff; }
.account button { width: 100%; height: 22px; background: #d2d2d2; color: #111; font: 12px "Liberation Sans", sans-serif; gap: 4px; }
.account svg { width: 17px; height: 17px; }
.account .tri { border-width: 6px 5px 0; border-top-color: #000; }
.workspaces { display: flex; align-items: center; gap: 8px; font-size: 22px; }
.workspaces .combo { width: 276px; height: 44px; }

/* tool bar */
.tool-row { display: flex; height: 62px; margin-top: 2px; padding-left: 5px; }
.tool-row > .grip-v { margin: 4px 7px 4px 0; }
.tool-dock { flex: 1; background: #000; min-width: 0; margin-right: 8px; }
.tools { display: inline-flex; height: 31px; background: #444; padding-right: 2px; vertical-align: top; }
.tools button { width: 32px; height: 30px; position: relative; }
.tools svg { width: 24px; height: 24px; }
.fly::after { content: ""; position: absolute; right: 1px; bottom: 0; border: 2px solid transparent; border-right-color: #ddd; border-bottom-color: #ddd; }
.sep { width: 2px; height: 16px; margin: 8px 2px; background: #111; }
.tools .combo { border: 0; margin: 3px 1px 0 2px; height: 28px; }
.tools .combo select { font-size: 12px; padding: 4px 20px 0 6px; }
.tools .combo::after { right: 7px; border-width: 6px 3px 0; }
.combo-all { width: 67px; }
.combo-view { width: 67px; }
.tools .combo-set { width: 117px; }
.tools .combo-set select { font: 21px "Noto Sans", sans-serif; padding: 2px 36px 0 8px; text-overflow: clip; }
.combo-path { width: 296px; height: 62px; }
.combo-path select { font-size: 22px; }
.overflow.small { width: 27px; }
.overflow.small svg { width: 12px; height: 9px; }

/* workspace */
.workspace {
  flex: 1;
  display: grid;
  grid-template-columns: 18px 150px 598px 743px minmax(0, 1fr) 752px;
  grid-template-rows: 32px 8px 44px 88px minmax(1324px, 1fr);
  margin-top: 2px;
}
.edge { grid-area: 1 / 1 / 5 / 2; padding: 6px 0 12px 4px; }
.edge .grip-v { height: 100%; }
.ribbon { grid-area: 1 / 2 / 4 / 5; height: 80px; border-bottom: 2px solid #2a2a2a; font-family: "Noto Sans", sans-serif; }
.void-top { grid-area: 1 / 5 / 2 / 7; background: #000; }
.void-mid { grid-area: 3 / 5 / 4 / 6; background: #000; height: 36px; }
.strip { display: flex; flex-direction: column; gap: 8px; padding: 4px 0 8px; }
.strip .void { flex: 1; }
.strip .grip-h { margin: 0 6px 0 2px; }
.strip-a { grid-area: 4 / 2 / 5 / 3; margin-right: 8px; }
.strip-b { grid-area: 4 / 3 / 5 / 4; margin-right: 8px; }
.void-view { grid-area: 4 / 4 / 5 / 6; background: #000; margin-bottom: 8px; }

.ribbon-tabs { height: 42px; background: #515151; border-top: 2px solid #6c6c6c; border-bottom: 2px solid #2a2a2a; display: flex; align-items: flex-end; padding-left: 8px; color: #b4b4b4; }
.ribbon-tabs button { height: 34px; padding: 0 49px 2px; font-size: 22px; color: inherit; }
.ribbon-tabs .current { padding: 0 18px 2px 45px; height: 36px; margin: 0 4px -2px 0; background: linear-gradient(#6c6c6c, #4c4c4c); border: 2px solid #2a2a2a; border-bottom: 0; border-radius: 4px 4px 0 0; color: #ddd; }
.ribbon-tabs .ribbon-toggle { padding: 0 0 4px; margin-left: 14px; gap: 12px; }
.ribbon-toggle span { width: 28px; height: 17px; border-radius: 4px; background: #e6e8ee; display: flex; align-items: center; justify-content: center; }
.ribbon-body { height: 36px; background: linear-gradient(#474747, #383838); padding-left: 3px; }
.ribbon-body button { height: 36px; padding: 0 8px; border: 2px solid #626262; border-top: 0; background: #4a4a4a; font-size: 23px; color: #eee; }

.layouts { grid-area: 5 / 1 / 6 / 3; margin-right: 8px; padding-top: 4px; display: flex; flex-direction: column; gap: 8px; }
.layouts .grip-h { margin: 0 6px 0 4px; }
.layouts .void { flex: 1; }
.layout-bar { width: 79px; height: 653px; background: linear-gradient(90deg, #333, #2d2d2d 90%, #222); display: flex; flex-direction: column; justify-content: flex-end; gap: 20px; padding-bottom: 5px; }
.play { width: 40px; height: 39px; margin-left: 19px; border-radius: 6px; background: #4b4b4b; border: 1px solid #151515; }
.play svg { width: 12px; height: 16px; margin-left: 4px; }
.layout-thumb { height: 88px; margin-left: 7px; border-radius: 6px 0 0 6px; background: linear-gradient(#4a5f7c, #3d82d9); }
.layout-thumb span { width: 62px; height: 56px; border: 2px solid #223; border-radius: 3px; background: #5f6570; margin-right: 2px; }

/* scene explorer */
.explorer-dock { grid-area: 5 / 3 / 6 / 4; margin-right: 8px; padding-top: 4px; display: flex; flex-direction: column; gap: 8px; }
.explorer-dock .grip-h { margin: 0 6px 0 4px; }
.explorer-dock .void { flex: 1; }
.explorer { width: 295px; height: 653px; background: #444; color: #fff; font-family: "Noto Sans", sans-serif; display: flex; flex-direction: column; overflow: hidden; }
.ex-menu { display: flex; gap: 25px; padding: 6px 0 4px 18px; }
.ex-menu button { font-size: 23px; height: 30px; color: #fff; }
.ex-find { display: flex; align-items: center; height: 38px; }
.ex-find input { width: 150px; height: 38px; margin-left: 4px; border: 1px solid #606060; }
.ex-find button, .ex-foot button { width: 24px; height: 24px; border-radius: 0; }
.ex-find svg, .ex-foot button svg { width: 24px; height: 24px; }
.bar { width: 1px; align-self: stretch; background: #8a8a8a; margin: 2px 2px 2px 3px; }
.ex-body { display: flex; flex: 1; min-height: 0; margin-top: 2px; }
.ex-side { width: 25px; padding-top: 2px; }
.ex-filters { display: grid; grid-auto-rows: 20px; gap: 3px; width: 22px; }
.ex-filters button { background: #5b87c2; width: 22px; }
.ex-filters svg { width: 16px; height: 16px; overflow: visible; }
.ex-extra { width: 18px; margin: 5px 0 0 2px; border-top: 1px solid #888; padding-top: 2px; display: grid; }
.ex-extra button { height: 23px; width: 18px; }
.ex-extra svg { width: 16px; height: 16px; }
.dim { opacity: .6; }
.ex-list { flex: 1; min-width: 0; display: flex; flex-direction: column; justify-content: space-between; }
.ex-list table { border-collapse: collapse; table-layout: fixed; width: 380px; }
.ex-list th { font-weight: normal; font-size: 20px; line-height: 28px; height: 30px; padding: 0 0 0 4px; border: 1px solid #606060; text-align: left; white-space: nowrap; overflow: hidden; }
.ex-list .name { width: 258px; }
.ex-list th .tri { display: inline-block; margin: 0 0 5px 3px; border-left-width: 3px; border-right-width: 3px; }
.hscroll { display: flex; background: #f0f0f0; height: 34px; }
.hscroll button { width: 34px; }
.hscroll svg { width: 12px; height: 12px; fill: none; stroke: #555; stroke-width: 2; }
.hscroll i { width: 167px; background: #cbcbcb; }
.hscroll button:last-child { margin-left: auto; }
.ex-foot { display: flex; align-items: center; height: 45px; }
.ex-foot input { width: 145px; height: 38px; margin-left: 4px; padding-left: 2px; border: 1px solid #606060; color: #ff0; font-size: 22px; }
.ex-foot .tri { margin: 0 4px; }
.more { width: 14px; height: 12px; margin: 0 -2px 16px auto; fill: none; stroke: #23235c; stroke-width: 3; }

/* viewport */
.view-dock { grid-area: 5 / 4 / 6 / 6; background: #000; }
.viewport { position: relative; width: 741px; height: 662px; border: 2px solid #7a6425; background: linear-gradient(#161616, #343434 40%, #4a4a4a); }
.view-label { position: absolute; left: 4px; top: 6px; font: 11px/14px "Noto Sans", sans-serif; color: #ddd; display: flex; gap: 4px; }
.scene { width: 737px; height: 658px; }
.scene line { stroke: #5c5c5c; stroke-width: 1; }
.scene line.axis { stroke: #000; }
.cube text { font: 7px "Liberation Sans", sans-serif; fill: #555; }
.cube .pt { font-size: 11px; fill: #999; }
.axes path { fill: none; }
.axes text { font: 10px "Noto Sans", sans-serif; }

/* command panel */
.command { grid-area: 2 / 6 / 6 / 7; display: flex; flex-direction: column; gap: 8px; }
.peek { display: flex; flex-direction: column; padding: 4px 0 0 9px; overflow: hidden; }
.peek .grip-h { margin: 0 6px 8px 3px; }
.peek-a { height: 44px; padding-top: 12px; }
.peek-b { height: 80px; }
.peek-c { flex: 1; }
.peek > * { flex: none; }
.tabs { display: flex; gap: 2px; height: 52px; }
.tabs button { width: 62px; height: 52px; background: #383838; border-radius: 6px 6px 0 0; }
.tabs .current { background: #444; border: 2px solid #3a3a3a; border-bottom: 0; height: 54px; position: relative; }
.tabs svg { width: 34px; height: 34px; }
.sheet { border: 2px solid #3a3a3a; border-radius: 0 6px 4px 4px; }
.peek-b .sheet { height: 30px; }
.peek-c .sheet { flex: 1; padding: 10px 7px; display: flex; flex-direction: column; }
.cats { display: flex; gap: 4px; margin: 0 0 14px 3px; }
.cats button { width: 40px; height: 40px; }
.cats svg { width: 30px; height: 30px; }
.cats .on svg { width: 34px; height: 34px; }
.combo-prim { height: 42px; margin-bottom: 9px; }
.combo-prim select { font-size: 21px; }
.rollouts { display: flex; gap: 6px; flex: 1; }
.rollout-list { flex: 1; }
.track { width: 12px; background: #3d3d3d; border-radius: 5px; }
.rollout { background: #515151; border: 2px solid #3f3f3f; border-radius: 5px; margin-bottom: 6px; padding-bottom: 4px; }
.rollout header { display: flex; height: 17px; gap: 13px; padding: 0 14px 0 10px; align-items: flex-start; overflow: hidden; }
.rollout .pale { margin-top: 12px; }
.rollout h2 { flex: 1; font: bold 22px/24px "DejaVu Sans Condensed", sans-serif; color: #fff; height: 17px; overflow: hidden; padding-top: 4px; }
.dots { width: 10px; height: 10px; margin-top: 11px; background: repeating-linear-gradient(90deg, transparent 0 2px, #515151 2px 4px), repeating-linear-gradient(#aaa 0 2px, transparent 2px 4px); }
.object-type { display: grid; grid-template: 20px 258px 166px / 308px 1fr; margin: 0 28px 4px; }
.pane { grid-area: 1 / 1 / 3 / 2; font-size: 11px; color: #ddd; padding-bottom: 4px; }
.pane label { display: flex; align-items: center; gap: 3px; height: 39px; padding: 0 0 4px 51px; color: #8a8a8a; }
.pane input { appearance: none; width: 11px; height: 12px; border: 1px solid #454545; background: #575757; }
.primitives { display: grid; grid-template-columns: 136px 136px; grid-auto-rows: 1fr; gap: 8px 20px; height: 235px; }
.primitives button { border: 1px solid #454545; border-radius: 4px; background: #646464; color: #e4e4e4; }
.gap-right { grid-area: 2 / 2 / 4 / 3; background: #000; }
.gap-left { grid-area: 3 / 1 / 4 / 2; background: #000; }
.ghost { height: 44px; margin: 0 28px; }
.ghost i { display: block; height: 8px; background: #444; border: 2px solid #3c3c3c; border-width: 2px 0; }
.ghost h2 { height: auto; padding: 6px 0 0 8px; }
.ghost.tall { height: 70px; }
.ghost-end { height: 14px; margin: 0 28px; background: #444; border-top: 2px solid #3c3c3c; }
.name-color { display: flex; margin: 12px 28px 4px 24px; height: 51px; }
.name-color input { width: 264px; height: 38px; background: #5a5a5a; border: 1px solid #484848; margin-right: 6px; }
.swatch { width: 33px; height: 38px; background: #c42f7f; border: 1px solid #000; margin-right: 9px; }
.name-color i { flex: 1; margin-top: 11px; height: 40px; background: #444; border-top: 2px solid #3c3c3c; }
.name-rest { height: 84px; margin: 0 28px; background: #444; border-top: 2px solid #3c3c3c; }

/* timeline */
.timeline { display: flex; height: 104px; padding-left: 4px; }
.timeline > .grip-v { margin: 14px 8px 4px 0; }
.time-main { flex: 1; }
.time-slider { display: flex; gap: 1px; height: 50px; padding: 8px 0 7px; font-size: 11px; }
.time-slider button { width: 15px; background: #646464; border: 1px solid #3a3a3a; border-radius: 4px; }
.time-slider .frame { width: 125px; font-family: "Noto Sans", sans-serif; }
.track-row { display: flex; border-top: 2px solid #0a0a0a; height: 54px; padding-right: 50px; }
.mini-curve { width: 50px; height: 26px; padding-right: 10px; }
.mini-curve svg { width: 16px; height: 14px; }
.ruler { flex: 1; height: 52px; background: #292929; border-bottom: 1px solid #383838; padding: 0 12px 0 13px; }
.scale {
  list-style: none; display: flex; justify-content: space-between; height: 51px; padding-top: 12px;
  border-right: 1px solid #6a6a6a;
  font-size: 20px; color: #bbb;
  background:
    linear-gradient(90deg, #6a6a6a 1px, transparent 1px) 0 0 / 1% 11px repeat-x,
    linear-gradient(90deg, #6a6a6a 1px, transparent 1px) 0 0 / 5% 13px repeat-x,
    linear-gradient(90deg, #6a6a6a 1px, transparent 1px) 0 100% / 5% 20px repeat-x;
}
.scale li { width: 0; display: flex; justify-content: center; line-height: 24px; }
.scale li:first-child::before { content: ""; position: absolute; width: 7px; height: 23px; margin-top: -11px; background: #c8b41e99; }

/* status */
.status { display: flex; align-items: center; height: 31px; padding-left: 6px; font: 11px "Noto Sans", sans-serif; color: #fff; overflow: hidden; }
.listener { width: 98px; height: 23px; align-self: flex-end; background: #ddc4c4; border: 2px solid #777; border-bottom: 0; border-right-color: #fff; }
.status .bar { background: #222; }
.message { width: 1524px; padding-top: 3px; }
.coords, .playback, .keys, .nav { display: flex; align-items: center; }
.coords { padding-top: 7px; flex: none; }
.coords button { width: 27px; }
.coords svg { width: 18px; height: 18px; }
.coords label { display: flex; align-items: center; gap: 4px; width: 84px; padding-left: 2px; }
.coords label input { width: 58px; height: 18px; background: #585858; border: 1px solid #3a3a3a; font: 18px/18px "DejaVu Sans Condensed", sans-serif; padding: 10px 0 0 4px; color: #999; }
.coords span { width: 120px; padding-left: 3px; }
.playback { padding-top: 7px; }
.playback svg { width: 20px; height: 16px; }
.playback button { width: 22px; }
.playback .bar { margin: 0 2px; }
.keys { margin-left: 143px; gap: 4px; align-self: flex-end; align-items: flex-end; }
.keys button { width: 47px; height: 21px; background: #646464; border-radius: 3px 3px 0 0; }
.keys .set { width: 43px; }
.keys .combo { width: 115px; height: 21px; border-width: 1px; }
.keys select { padding: 6px 20px 0 4px; }
.keys .combo::after { right: 6px; border-width: 6px 3px 0; margin-top: 0; }
.nav { margin-left: auto; padding: 7px 112px 0 0; gap: 3px; }
.nav button { width: 21px; }
.nav svg { width: 20px; height: 20px; }

/* taskbar */
.taskbar { display: flex; height: 80px; background: #272727; color: #fff; font-family: "Noto Sans", sans-serif; }
.taskbar > button { width: 96px; }
.taskbar > button svg { width: 36px; height: 36px; }
.taskbar .start { background: linear-gradient(90deg, #454240, #353332); }
.taskbar .start svg { width: 32px; height: 32px; }
.search { width: 688px; background: #f1f1f1; border: 2px solid #bcbcbc; display: flex; align-items: center; padding-left: 22px; gap: 24px; }
.search svg { width: 32px; height: 32px; fill: none; stroke: #111; stroke-width: 2; }
.search input { flex: 1; height: 60px; font-size: 28px; }
.search input::placeholder { color: #333; opacity: 1; }
.apps { display: flex; gap: 2px; margin-left: 6px; }
.apps button { width: 96px; position: relative; }
.apps svg { width: 48px; height: 48px; }
.apps button:first-child svg { width: 44px; height: 44px; }
.apps .open::after { content: ""; position: absolute; bottom: 0; left: 8px; right: 8px; height: 4px; background: #a8dcf5; }
.apps .active { background: #666; }
.apps .active::after { left: 0; right: 0; }
.tray { margin-left: auto; display: flex; }
.tray button { width: 64px; }
.tray svg { width: 32px; height: 32px; }
.tray .wide { width: 79px; }
.tray .wide svg { width: 44px; height: 28px; }
.tray .lang, .tray .clock { flex-direction: column; font-size: 23px; line-height: 36px; width: 76px; }
.tray .clock { width: 144px; }
.tray .m { width: 100px; }
.tray .m svg { width: 42px; height: 36px; }
.tray .notes { width: 90px; }
.tray .notes svg { width: 52px; height: 52px; }
.tray text { font: 24px "Noto Sans", sans-serif; fill: #fff; }
.peek-desktop { width: 12px; border-left: 2px solid #777; }
```
FILE: script.js
```js
// Draws the home grid of the perspective view inside the scene's own coordinates.
const corners = { left: [237, 340], top: [460, 239], right: [725, 340], bottom: [516, 504] };
const divisions = 14;

// Point at share u of the edge a-b; k is how fast the edge recedes.
function along(a, b, k, u) {
  const t = u / (u + (1 - u) * k);
  return [a[0] + (b[0] - a[0]) * t, a[1] + (b[1] - a[1]) * t];
}

function addLine(p, q, isAxis) {
  const line = document.createElementNS("http://www.w3.org/2000/svg", "line");
  line.setAttribute("x1", p[0]);
  line.setAttribute("y1", p[1]);
  line.setAttribute("x2", q[0]);
  line.setAttribute("y2", q[1]);
  if (isAxis) line.setAttribute("class", "axis");
  document.getElementById("grid").appendChild(line);
}

const order = [...Array(divisions + 1).keys()].filter(i => i !== divisions / 2).concat(divisions / 2);
for (const i of order) {
  const u = i / divisions;
  const axis = i === divisions / 2;
  addLine(along(corners.left, corners.top, 0.805, u), along(corners.bottom, corners.right, 0.763, u), axis);
  addLine(along(corners.left, corners.bottom, 1.308, u), along(corners.top, corners.right, 1.25, u), axis);
}
```
